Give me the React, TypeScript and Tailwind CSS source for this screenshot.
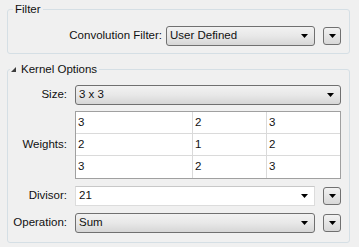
import { ReactNode } from "react";

const font = { fontFamily: '"Liberation Sans", Arial, sans-serif' };

function Arrow() {
  return (
    <svg width="7" height="4" viewBox="0 0 7 4" className="shrink-0">
      <polygon points="0,0 7,0 3.5,4" fill="#000" />
    </svg>
  );
}

function Combo({ value, className = "" }: { value: string; className?: string }) {
  return (
    <div
      className={`h-[20px] flex items-center justify-between pl-[3px] pr-[6px] border border-[#707070] rounded-[3px] bg-linear-to-b from-[#f2f2f2] via-[#e8e8e8] to-[#d6d6d6] ${className}`}
    >
      <span>{value}</span>
      <Arrow />
    </div>
  );
}

function SmallBtn() {
  return (
    <div className="w-[18px] h-[18px] shrink-0 flex items-center justify-center border border-[#707070] rounded-[3px] bg-linear-to-b from-[#f2f2f2] to-[#d8d8d8]">
      <Arrow />
    </div>
  );
}

function Label({ children }: { children: ReactNode }) {
  return <div className="text-right whitespace-nowrap">{children}</div>;
}

const weights = [
  ["3", "2", "3"],
  ["2", "1", "2"],
  ["3", "2", "3"],
];

export default function App() {
  return (
    <div
      className="w-[359px] h-[247px] bg-[#f0f0f0] pl-[7px] pr-[9px] pt-[2px] text-[11.5px] text-[#111] overflow-hidden"
      style={font}
    >
      <fieldset className="border border-[#d5dfe5] rounded-[3px]">
        <legend className="ml-[5px] px-[2px] leading-[14px]">Filter</legend>
        <div className="flex items-center justify-end pt-[10px] pb-[7px] pr-[8px]">
          <Label>Convolution Filter:</Label>
          <Combo value="User Defined" className="w-[149px] ml-[4px]" />
          <div className="ml-[8px]">
            <SmallBtn />
          </div>
        </div>
      </fieldset>

      <fieldset className="mt-[8px] border border-[#d5dfe5] rounded-[3px]">
        <legend className="ml-[2px] px-[1px] leading-[14px]">
          <span className="flex items-center gap-[5px] pr-[1px]">
            <svg width="5" height="5" viewBox="0 0 5 5">
              <polygon points="5,0 5,5 0,5" fill="#3c3c3c" />
            </svg>
            Kernel Options
          </span>
        </legend>
        <div className="grid grid-cols-[59px_1fr] gap-x-[8px] items-center pt-[9px] pb-[9px] pr-[8px]">
          <Label>Size:</Label>
          <Combo value="3 x 3" />

          <div className="mt-[6px]">
            <Label>Weights:</Label>
          </div>
          <div className="mt-[6px] border border-[#a0a0a0] bg-white">
            {weights.map((row, r) => (
              <div
                key={r}
                className={`grid grid-cols-[117px_74px_1fr] h-[22px] ${r < 2 ? "border-b border-[#dadada]" : "h-[21px]"}`}
              >
                {row.map((v, c) => (
                  <div
                    key={c}
                    className={`flex items-center pl-[2px] ${c < 2 ? "border-r border-[#dadada]" : ""}`}
                  >
                    {v}
                  </div>
                ))}
              </div>
            ))}
          </div>

          <div className="mt-[7px]">
            <Label>Divisor:</Label>
          </div>
          <div className="mt-[7px] flex items-center">
            <div className="flex-1 h-[20px] flex items-center justify-between pl-[3px] pr-[6px] bg-white border border-[#dcdcdc] border-t-[#c8c8c8]">
              <span>21</span>
              <Arrow />
            </div>
            <div className="ml-[8px]">
              <SmallBtn />
            </div>
          </div>

          <div className="mt-[7px]">
            <Label>Operation:</Label>
          </div>
          <div className="mt-[7px] flex items-center">
            <Combo value="Sum" className="flex-1" />
            <div className="ml-[8px]">
              <SmallBtn />
            </div>
          </div>
        </div>
      </fieldset>
    </div>
  );
}
